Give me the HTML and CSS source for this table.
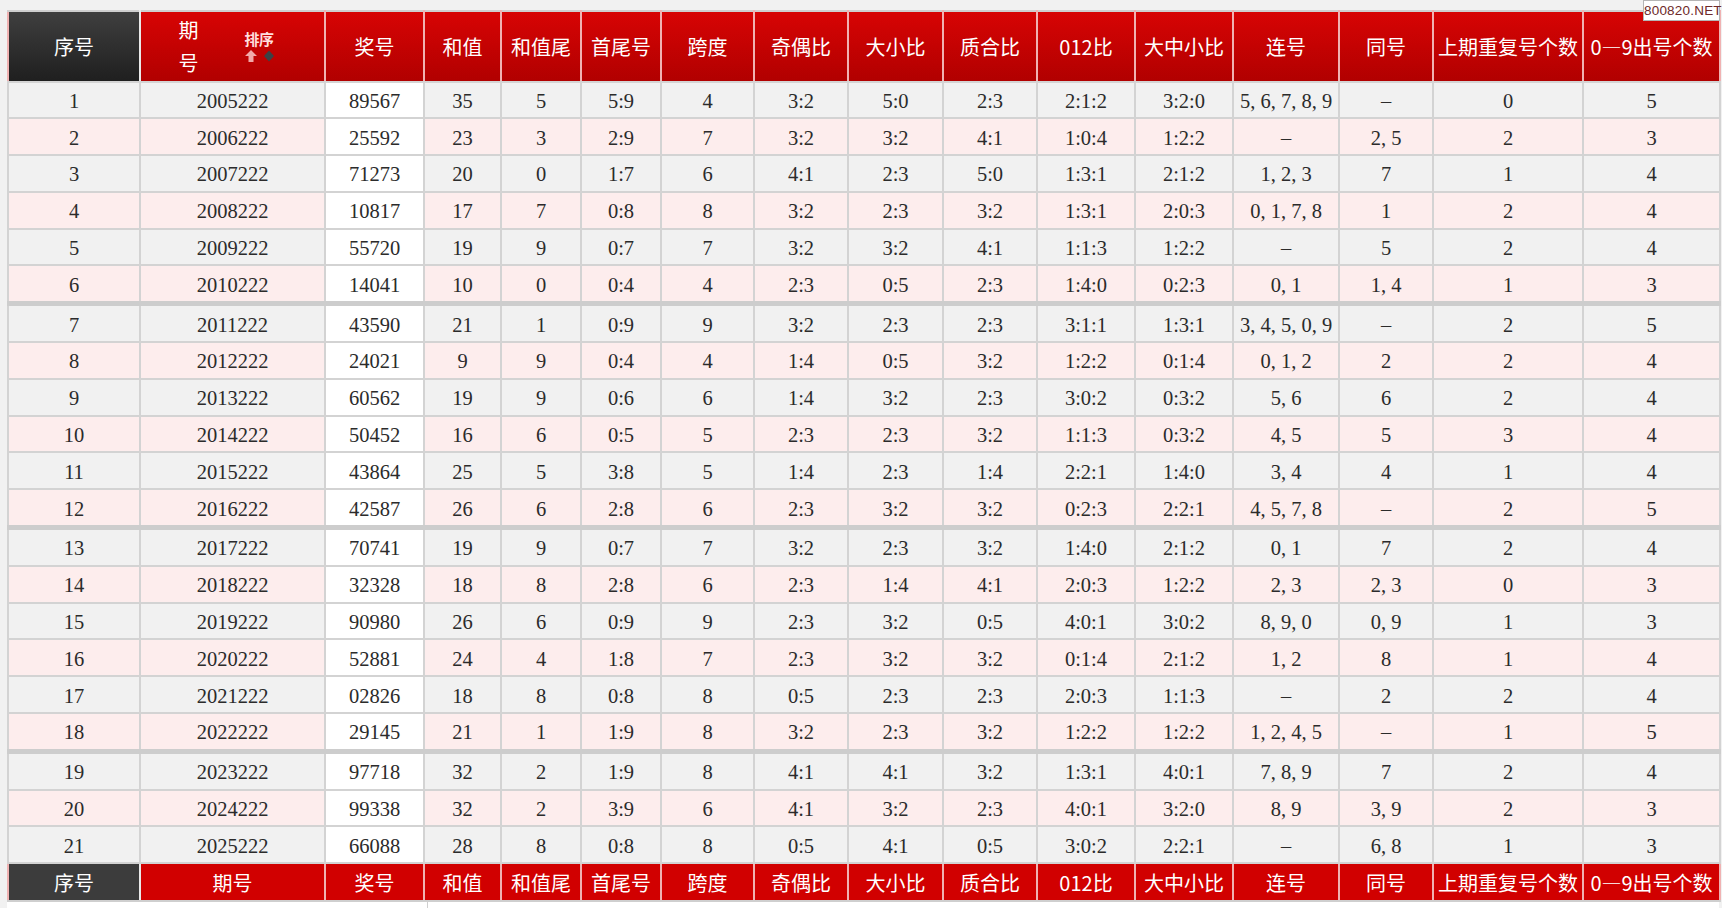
FILE: index.html
```html
<!DOCTYPE html>
<html lang="zh-CN">
<head>
<meta charset="utf-8">
<title>开奖数据</title>
<link rel="stylesheet" href="styles.css">
</head>
<body>
<div class="mark">800820.NET</div>
<div class="page">
<table class="draw">
<colgroup>
<col class="w1"><col class="w2"><col class="w3"><col class="w4"><col class="w5"><col class="w6"><col class="w7"><col class="w8"><col class="w9"><col class="w10"><col class="w11"><col class="w12"><col class="w13"><col class="w14"><col class="w15"><col class="w16">
</colgroup>
<thead>
<tr>
<th class="dark">序号</th>
<th><div class="qh"><span class="qh-t">期号</span><span class="sort"><span class="sort-t">排序</span><svg class="sort-i" width="30" height="12" viewBox="0 0 30 12"><path d="M6 0 L12 6 L8.5 6 L8.5 12 L3.5 12 L3.5 6 L0 6 Z" fill="#f2a9a9"/><path d="M24 0.5 L29 6 L24 11.5 L19 6 Z" fill="#3b4246"/></svg></span></div></th>
<th>奖号</th><th>和值</th><th>和值尾</th><th>首尾号</th><th>跨度</th><th>奇偶比</th><th>大小比</th><th>质合比</th><th>012比</th><th>大中小比</th><th>连号</th><th>同号</th><th>上期重复号个数</th><th>0—9出号个数</th>
</tr>
</thead>
<tbody>
<tr class="odd"><td>1</td><td>2005222</td><td class="num">89567</td><td>35</td><td>5</td><td>5:9</td><td>4</td><td>3:2</td><td>5:0</td><td>2:3</td><td>2:1:2</td><td>3:2:0</td><td>5, 6, 7, 8, 9</td><td>–</td><td>0</td><td>5</td></tr>
<tr class="even"><td>2</td><td>2006222</td><td class="num">25592</td><td>23</td><td>3</td><td>2:9</td><td>7</td><td>3:2</td><td>3:2</td><td>4:1</td><td>1:0:4</td><td>1:2:2</td><td>–</td><td>2, 5</td><td>2</td><td>3</td></tr>
<tr class="odd"><td>3</td><td>2007222</td><td class="num">71273</td><td>20</td><td>0</td><td>1:7</td><td>6</td><td>4:1</td><td>2:3</td><td>5:0</td><td>1:3:1</td><td>2:1:2</td><td>1, 2, 3</td><td>7</td><td>1</td><td>4</td></tr>
<tr class="even"><td>4</td><td>2008222</td><td class="num">10817</td><td>17</td><td>7</td><td>0:8</td><td>8</td><td>3:2</td><td>2:3</td><td>3:2</td><td>1:3:1</td><td>2:0:3</td><td>0, 1, 7, 8</td><td>1</td><td>2</td><td>4</td></tr>
<tr class="odd"><td>5</td><td>2009222</td><td class="num">55720</td><td>19</td><td>9</td><td>0:7</td><td>7</td><td>3:2</td><td>3:2</td><td>4:1</td><td>1:1:3</td><td>1:2:2</td><td>–</td><td>5</td><td>2</td><td>4</td></tr>
<tr class="even"><td>6</td><td>2010222</td><td class="num">14041</td><td>10</td><td>0</td><td>0:4</td><td>4</td><td>2:3</td><td>0:5</td><td>2:3</td><td>1:4:0</td><td>0:2:3</td><td>0, 1</td><td>1, 4</td><td>1</td><td>3</td></tr>
<tr class="odd gs"><td>7</td><td>2011222</td><td class="num">43590</td><td>21</td><td>1</td><td>0:9</td><td>9</td><td>3:2</td><td>2:3</td><td>2:3</td><td>3:1:1</td><td>1:3:1</td><td>3, 4, 5, 0, 9</td><td>–</td><td>2</td><td>5</td></tr>
<tr class="even"><td>8</td><td>2012222</td><td class="num">24021</td><td>9</td><td>9</td><td>0:4</td><td>4</td><td>1:4</td><td>0:5</td><td>3:2</td><td>1:2:2</td><td>0:1:4</td><td>0, 1, 2</td><td>2</td><td>2</td><td>4</td></tr>
<tr class="odd"><td>9</td><td>2013222</td><td class="num">60562</td><td>19</td><td>9</td><td>0:6</td><td>6</td><td>1:4</td><td>3:2</td><td>2:3</td><td>3:0:2</td><td>0:3:2</td><td>5, 6</td><td>6</td><td>2</td><td>4</td></tr>
<tr class="even"><td>10</td><td>2014222</td><td class="num">50452</td><td>16</td><td>6</td><td>0:5</td><td>5</td><td>2:3</td><td>2:3</td><td>3:2</td><td>1:1:3</td><td>0:3:2</td><td>4, 5</td><td>5</td><td>3</td><td>4</td></tr>
<tr class="odd"><td>11</td><td>2015222</td><td class="num">43864</td><td>25</td><td>5</td><td>3:8</td><td>5</td><td>1:4</td><td>2:3</td><td>1:4</td><td>2:2:1</td><td>1:4:0</td><td>3, 4</td><td>4</td><td>1</td><td>4</td></tr>
<tr class="even"><td>12</td><td>2016222</td><td class="num">42587</td><td>26</td><td>6</td><td>2:8</td><td>6</td><td>2:3</td><td>3:2</td><td>3:2</td><td>0:2:3</td><td>2:2:1</td><td>4, 5, 7, 8</td><td>–</td><td>2</td><td>5</td></tr>
<tr class="odd gs"><td>13</td><td>2017222</td><td class="num">70741</td><td>19</td><td>9</td><td>0:7</td><td>7</td><td>3:2</td><td>2:3</td><td>3:2</td><td>1:4:0</td><td>2:1:2</td><td>0, 1</td><td>7</td><td>2</td><td>4</td></tr>
<tr class="even"><td>14</td><td>2018222</td><td class="num">32328</td><td>18</td><td>8</td><td>2:8</td><td>6</td><td>2:3</td><td>1:4</td><td>4:1</td><td>2:0:3</td><td>1:2:2</td><td>2, 3</td><td>2, 3</td><td>0</td><td>3</td></tr>
<tr class="odd"><td>15</td><td>2019222</td><td class="num">90980</td><td>26</td><td>6</td><td>0:9</td><td>9</td><td>2:3</td><td>3:2</td><td>0:5</td><td>4:0:1</td><td>3:0:2</td><td>8, 9, 0</td><td>0, 9</td><td>1</td><td>3</td></tr>
<tr class="even"><td>16</td><td>2020222</td><td class="num">52881</td><td>24</td><td>4</td><td>1:8</td><td>7</td><td>2:3</td><td>3:2</td><td>3:2</td><td>0:1:4</td><td>2:1:2</td><td>1, 2</td><td>8</td><td>1</td><td>4</td></tr>
<tr class="odd"><td>17</td><td>2021222</td><td class="num">02826</td><td>18</td><td>8</td><td>0:8</td><td>8</td><td>0:5</td><td>2:3</td><td>2:3</td><td>2:0:3</td><td>1:1:3</td><td>–</td><td>2</td><td>2</td><td>4</td></tr>
<tr class="even"><td>18</td><td>2022222</td><td class="num">29145</td><td>21</td><td>1</td><td>1:9</td><td>8</td><td>3:2</td><td>2:3</td><td>3:2</td><td>1:2:2</td><td>1:2:2</td><td>1, 2, 4, 5</td><td>–</td><td>1</td><td>5</td></tr>
<tr class="odd gs"><td>19</td><td>2023222</td><td class="num">97718</td><td>32</td><td>2</td><td>1:9</td><td>8</td><td>4:1</td><td>4:1</td><td>3:2</td><td>1:3:1</td><td>4:0:1</td><td>7, 8, 9</td><td>7</td><td>2</td><td>4</td></tr>
<tr class="even"><td>20</td><td>2024222</td><td class="num">99338</td><td>32</td><td>2</td><td>3:9</td><td>6</td><td>4:1</td><td>3:2</td><td>2:3</td><td>4:0:1</td><td>3:2:0</td><td>8, 9</td><td>3, 9</td><td>2</td><td>3</td></tr>
<tr class="odd"><td>21</td><td>2025222</td><td class="num">66088</td><td>28</td><td>8</td><td>0:8</td><td>8</td><td>0:5</td><td>4:1</td><td>0:5</td><td>3:0:2</td><td>2:2:1</td><td>–</td><td>6, 8</td><td>1</td><td>3</td></tr>
</tbody>
<tfoot>
<tr>
<td class="dark">序号</td><td>期号</td><td>奖号</td><td>和值</td><td>和值尾</td><td>首尾号</td><td>跨度</td><td>奇偶比</td><td>大小比</td><td>质合比</td><td>012比</td><td>大中小比</td><td>连号</td><td>同号</td><td>上期重复号个数</td><td>0—9出号个数</td>
</tr>
</tfoot>
</table>
<div class="below"><div class="below-a"></div><div class="below-b"></div></div>
</div>
</body>
</html>
```

FILE: styles.css
```css
html, body {
  margin: 0;
  padding: 0;
}

body {
  width: 1722px;
  height: 908px;
  overflow: hidden;
  position: relative;
  background: #f1f1f1;
  font-family: "Liberation Serif", "Noto Sans CJK SC", serif;
}

.page {
  padding: 10px 0 0 7px;
}

.draw {
  border-collapse: collapse;
  table-layout: fixed;
  width: 1712px;
}

.w1 { width: 132px; }
.w2 { width: 185px; }
.w3 { width: 99px; }
.w4 { width: 77px; }
.w5 { width: 80px; }
.w6 { width: 80px; }
.w7 { width: 93px; }
.w8 { width: 94px; }
.w9 { width: 95px; }
.w10 { width: 94px; }
.w11 { width: 98px; }
.w12 { width: 98px; }
.w13 { width: 106px; }
.w14 { width: 94px; }
.w15 { width: 150px; }
.w16 { width: 137px; }

.draw th {
  height: 68.5px;
  padding: 0;
  background: linear-gradient(#d70404, #b10000);
  color: #fff;
  font-family: "Noto Sans CJK SC", sans-serif;
  font-size: 20px;
  font-weight: 400;
  white-space: nowrap;
  border: 2px solid #f0b2b2;
  border-top-color: #cfcfcf;
  border-bottom-color: #d4d4d4;
}

.draw th.dark {
  background: linear-gradient(#3f3f3f, #1f1f1f);
  border-right-color: #e9e9e9;
}

.qh {
  display: flex;
  align-items: center;
  justify-content: center;
  gap: 46px;
  padding-right: 12px;
}

.qh-t {
  width: 20px;
  line-height: 33px;
  white-space: normal;
  text-align: left;
}

.sort {
  display: flex;
  flex-direction: column;
  align-items: flex-start;
  gap: 4px;
}

.sort-t {
  font-size: 15px;
  font-weight: 700;
  line-height: 15px;
  color: #ffdede;
  letter-spacing: -0.5px;
}

.sort-i {
  display: block;
}

.draw td {
  height: 31.8px;
  padding: 3px 0 0;
  text-align: center;
  font-size: 20.5px;
  color: #2b2b2b;
  white-space: nowrap;
  border: 2px solid #d3d3d3;
}

.draw tr.odd td {
  background: #f1f1f1;
}

.draw tr.even td {
  background: #fdeded;
}

.draw tr td.num {
  background: #ffffff;
}

.draw tr.gs td {
  border-top: 5px solid #cdcdcd;
}

.draw tfoot td {
  height: 36px;
  padding: 0;
  background: #d10000;
  color: #fff;
  font-family: "Noto Sans CJK SC", sans-serif;
  font-size: 20px;
  border-color: #f0b2b2;
  border-top-color: #d3d3d3;
  border-bottom-color: #cfcfcf;
}

.draw tfoot td.dark {
  background: #3c3c3c;
  border-right-color: #e9e9e9;
}

.below {
  width: 1712px;
  height: 8px;
  display: grid;
  grid-template-columns: 421px 1fr;
  background: #fff;
}

.below-a {
  border-right: 1px solid #cfcfcf;
}

.mark {
  position: absolute;
  top: 0;
  right: 2px;
  width: 75px;
  height: 19px;
  background: #fff;
  border: 1px solid #b5b5b5;
  color: #6e2a2a;
  font-family: "Liberation Sans", sans-serif;
  font-size: 13.5px;
  line-height: 19px;
  text-align: center;
  letter-spacing: 0.2px;
  z-index: 2;
}
```
